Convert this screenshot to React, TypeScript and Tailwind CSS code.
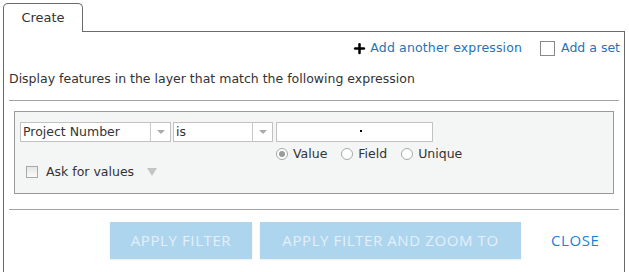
import { Plus } from "lucide-react";

const ui = "font-['DejaVu_Sans',sans-serif]";

function Select({ label, width }: { label: string; width: number }) {
  return (
    <div
      className="flex h-[20px] border border-[#c2c2c2] bg-white"
      style={{ width }}
    >
      <div className="flex-1 pl-[2px] leading-[18px] text-[#333]">{label}</div>
      <div className="w-[20px] border-l border-[#c8c8c8] flex items-center justify-center">
        <span className="w-0 h-0 border-l-[4px] border-r-[4px] border-t-[4px] border-l-transparent border-r-transparent border-t-[#aaa]" />
      </div>
    </div>
  );
}

function Radio({ label, checked }: { label: string; checked?: boolean }) {
  return (
    <div className="flex items-center gap-[5px]">
      <span className="w-[12px] h-[12px] rounded-full border border-[#a8a8a8] bg-white flex items-center justify-center">
        {checked && <span className="w-[6px] h-[6px] rounded-full bg-[#9a9a9a]" />}
      </span>
      <span>{label}</span>
    </div>
  );
}

export default function App() {
  return (
    <div className={`w-[629px] h-[272px] bg-white overflow-hidden pt-[3px] pl-[3px] ${ui}`}>
      {/* tab */}
      <div className="relative z-10 -mb-px w-[80px] h-[29px] border border-b-0 border-[#6a6a6a] rounded-t-[5px] bg-white flex items-center justify-center text-[13px] text-[#333]">
        Create
      </div>

      {/* panel */}
      <div className="w-[622px] h-[260px] border border-b-0 border-[#6a6a6a] text-[12.5px] text-[#333]">
        <div className="mt-[6px] h-[20px] flex items-center justify-end pr-[4px]">
          <Plus size={15} strokeWidth={4} className="text-black mr-[3px]" />
          <span className="text-[#1f72b8] tracking-[0.15px]">Add another expression</span>
          <span className="ml-[18px] w-[15px] h-[15px] border border-[#888] bg-white" />
          <span className="ml-[6px] text-[#1f72b8]">Add a set</span>
        </div>

        <div className="mt-[11px] h-[20px] leading-[20px] pl-[5px]">
          Display features in the layer that match the following expression
        </div>

        <div className="mt-[11px] mx-[5px] h-px bg-[#a3a3a3]" />

        {/* expression box */}
        <div className="mt-[10px] ml-[10px] w-[600px] h-[83px] border border-[#9a9a9a] bg-[#f4f6f5] pt-[10px] pl-[5px]">
          <div className="flex gap-[2px]">
            <Select label="Project Number" width={151} />
            <Select label="is" width={100} />
            <div className="ml-[1px] w-[157px] h-[20px] border border-[#c2c2c2] bg-white flex items-center justify-center">
              <span className="w-[2px] h-[2px] bg-black ml-[12px] mb-[3px]" />
            </div>
          </div>
          <div className="mt-[4px] h-[16px] ml-[256px] flex items-center gap-[14px]">
            <Radio label="Value" checked />
            <Radio label="Field" />
            <Radio label="Unique" />
          </div>
          <div className="mt-[1px] h-[18px] ml-[6px] flex items-center">
            <span className="w-[12px] h-[12px] border border-[#a8a8a8] bg-[linear-gradient(#e6e6e6,#fafafa)]" />
            <span className="ml-[8px]">Ask for values</span>
            <span className="ml-[13px] w-0 h-0 border-l-[5px] border-r-[5px] border-t-[8px] border-l-transparent border-r-transparent border-t-[#c4c4c4]" />
          </div>
        </div>

        <div className="mt-[15px] mx-[5px] h-px bg-[#a3a3a3]" />

        {/* buttons */}
        <div className="mt-[12px] ml-[106px] flex items-center font-['Open_Sans',sans-serif] text-[15px] tracking-[0.6px]">
          <button className="w-[142px] h-[37px] bg-[#add5ee] text-[#e3f0f9] shadow-[0_1px_2px_rgba(0,0,0,0.08)]">
            APPLY FILTER
          </button>
          <button className="ml-[8px] w-[261px] h-[37px] bg-[#add5ee] text-[#e3f0f9] shadow-[0_1px_2px_rgba(0,0,0,0.08)]">
            APPLY FILTER AND ZOOM TO
          </button>
          <span className="ml-[30px] text-[#1883d6]">CLOSE</span>
        </div>
      </div>
    </div>
  );
}
